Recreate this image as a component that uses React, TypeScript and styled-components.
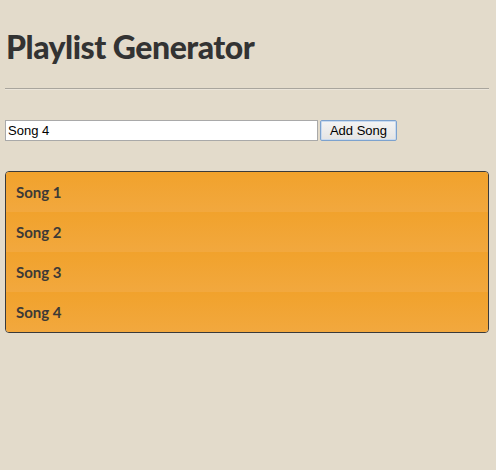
import React, { useState } from 'react';
import styled, { createGlobalStyle } from 'styled-components';

const GlobalStyle = createGlobalStyle`
    html, body {
        margin: 0;
        padding: 0;
        background: #e3dbcb;
    }
`

const Page = styled.div`
    padding: 0 7px 0 5px;
`

const Title = styled.h1`
    font-family: Lato, "Open Sans", sans-serif;
    font-weight: 900;
    font-size: 32px;
    letter-spacing: -0.5px;
    color: #333333;
    margin: 0;
    padding: 27px 0 0 1px;
    line-height: 40px;
`

const Rule = styled.hr`
    border: none;
    border-top: 1px solid #a9a59d;
    border-bottom: 1px solid #ebe5da;
    margin: 21px 0 0 0;
`

const Form = styled.form`
    display: flex;
    align-items: center;
    gap: 2px;
    margin-top: 30px;
`

const TextInput = styled.input`
    width: 313px;
    height: 21px;
    box-sizing: border-box;
    border: 1px solid #a9a9a9;
    padding: 0 2px;
    font-family: "Liberation Sans", Arial, sans-serif;
    font-size: 13px;
    color: #000;
    background: #fff;
    outline: none;
`

const AddButton = styled.button`
    width: 77px;
    height: 21px;
    box-sizing: border-box;
    border: 1px solid #7da2ce;
    border-radius: 2px;
    background: linear-gradient(#f4f4f4, #e4e4e4);
    box-shadow: inset 0 0 0 1px #c8daf0;
    font-family: "Liberation Sans", Arial, sans-serif;
    font-size: 13px;
    color: #000;
    padding: 0;
`

const List = styled.ul`
    list-style: none;
    margin: 30px 0 0 0;
    padding: 0;
    border: 1px solid #3a3a3a;
    border-radius: 4px;
    overflow: hidden;
`

const Item = styled.li`
    height: 40px;
    display: flex;
    align-items: center;
    padding-left: 10px;
    background: linear-gradient(#f1a22c, #f2a83e);
    font-family: Lato, "Open Sans", sans-serif;
    font-weight: 700;
    font-size: 15px;
    color: #3d3a36;
`

export default function App() {
    const [songs, setSongs] = useState(['Song 1', 'Song 2', 'Song 3', 'Song 4']);
    const [value, setValue] = useState('Song 4');

    return (
        <Page>
            <GlobalStyle />
            <Title>Playlist Generator</Title>
            <Rule />
            <Form onSubmit={(e) => {
                e.preventDefault();
                setSongs([...songs, value]);
            }}>
                <TextInput value={value} onChange={(e) => setValue(e.target.value)} />
                <AddButton type="submit">Add Song</AddButton>
            </Form>
            <List>
                {songs.map((song, index) => (
                    <Item key={index}>{song}</Item>
                ))}
            </List>
        </Page>
    )
}
